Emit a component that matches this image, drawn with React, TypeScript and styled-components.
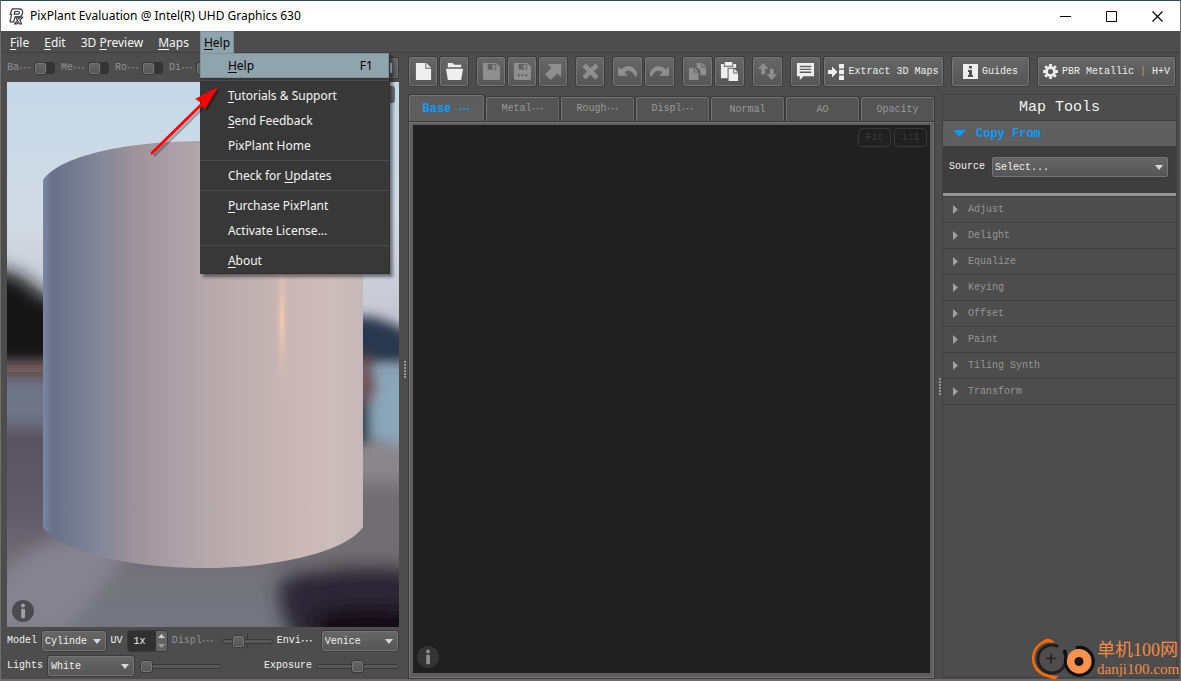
import React from "react";
import styled, { createGlobalStyle, css } from "styled-components";

const mono = `"Liberation Mono", "Noto Sans CJK SC", monospace`;
const sans = `"Noto Sans", "Open Sans", sans-serif`;

const raised = css`
  border: 1px solid #3b3b3b;
  border-radius: 3px;
  background: linear-gradient(#676767, #555555);
  box-shadow: inset 0 0 0 1px #757575;
`;

const GlobalStyle = createGlobalStyle`
  *, *::before, *::after { box-sizing: border-box; }
  body { margin: 0; background: #4d4d4d; font-family: ${mono}; font-size: 10px; color: #f2f2f2; }
  button, input, select { font: inherit; color: inherit; margin: 0; }
  button { cursor: pointer; }
  h2, h3, ul { margin: 0; padding: 0; font: inherit; list-style: none; }
  svg { display: block; flex: none; }
`;

const Window = styled.div`
  position: relative;
  display: flex;
  flex-direction: column;
  min-height: 100vh;
  background: #4d4d4d;
  border: 1px solid #6e6e6e;
  border-top-color: #24505a;
  border-bottom: 2px solid #6c6a6a;
  overflow: hidden;
`;

const TitleBar = styled.header`
  display: flex;
  align-items: center;
  height: 30px;
  padding-left: 8px;
  gap: 6px;
  background: #ffffff;
  color: #000000;
  font: 12px/30px ${sans};
`;

const WindowTitle = styled.span`
  flex: 1;
`;

const CaptionButtons = styled.div`
  display: flex;
`;

const CaptionButton = styled.button`
  display: grid;
  place-items: center;
  width: 46px;
  height: 30px;
  padding: 0;
  border: 0;
  background: none;
`;

const MenuBar = styled.nav`
  display: flex;
  gap: 7px;
  height: 22px;
  padding-left: 5px;
  border-bottom: 1px solid #414141;
  font: 12px/20px ${sans};
`;

const MenuSlot = styled.div`
  position: relative;
`;

const MenuTitle = styled.button<{ $open?: boolean }>`
  height: 22px;
  padding: 0 3px;
  border: 1px solid ${(p) => (p.$open ? "#7b929d" : "transparent")};
  border-width: 1px 1px 0;
  background: ${(p) => (p.$open ? "#90a4ae" : "none")};
  color: ${(p) => (p.$open ? "#000000" : "#f5f5f5")};
`;

const Key = styled.u`
  text-underline-offset: 2px;
  text-decoration-thickness: 1px;
`;

const Dropdown = styled.ul`
  position: absolute;
  z-index: 5;
  top: 22px;
  left: 0;
  width: 190px;
  background: #383838;
  border: 1px solid #303030;
  border-width: 0 1px 1px 0;
  box-shadow: 3px 3px 3px rgba(0, 0, 0, 0.45);
  color: #f5f5f5;
`;

const DropdownItem = styled.button<{ $active?: boolean }>`
  display: flex;
  justify-content: space-between;
  align-items: center;
  width: 100%;
  height: 25px;
  padding: 0 15px 0 27px;
  border: 1px solid ${(p) => (p.$active ? "#7b929d" : "transparent")};
  background: ${(p) => (p.$active ? "#90a4ae" : "none")};
  color: ${(p) => (p.$active ? "#000000" : "inherit")};
  white-space: pre;
`;

const Divider = styled.li`
  height: 5px;
  padding-top: 2px;
  &::before { content: ""; display: block; height: 1px; background: #4c4c4c; }
`;

const Body = styled.main`
  flex: 1;
  display: grid;
  grid-template-columns: minmax(0, 400fr) minmax(0, 779fr);
`;

const PreviewColumn = styled.section`
  display: flex;
  flex-direction: column;
  padding: 0 2px 2px 6px;
`;

const PreviewHeader = styled.div`
  display: flex;
  align-items: center;
  height: 29px;
  gap: 8px;
`;

const ToggleLabel = styled.label`
  display: flex;
  align-items: center;
  gap: 3px;
  width: 46px;
  color: #929292;
`;

const Dots = styled.span`
  font: 12px/12px "Noto Sans CJK SC", sans-serif;
`;

const Abbr = styled.span`
  display: flex;
  align-items: center;
  line-height: 12px;
`;

const Toggle = styled.input`
  appearance: none;
  flex: none;
  width: 21px;
  height: 12px;
  border-radius: 3px;
  background: #343434;
  &::before {
    content: "";
    display: block;
    width: 13px;
    height: 13px;
    ${raised}
  }
`;

const HeaderButton = styled.button`
  display: grid;
  place-items: center;
  width: 30px;
  height: 22px;
  margin-left: auto;
  padding: 0;
  ${raised}
`;

const Viewport = styled.div`
  position: relative;
  flex: 1;
  min-height: 300px;
`;

const SceneArt = styled.svg`
  position: absolute;
  inset: 0;
  width: 100%;
  height: 100%;
`;

const ViewportButton = styled.button`
  position: absolute;
  top: 4px;
  right: 4px;
  width: 40px;
  height: 17px;
  border: 0;
  border-radius: 3px;
  background: #6f767c;
`;

const InfoButton = styled.button<{ $x: number; $y: number }>`
  position: absolute;
  left: ${(p) => p.$x}px;
  bottom: ${(p) => p.$y}px;
  padding: 0;
  border: 0;
  background: none;
`;

const ControlRow = styled.div`
  display: flex;
  align-items: center;
  height: 25px;
  padding-top: 3px;
  gap: 4px;
`;

const FieldLabel = styled.label<{ $dim?: boolean }>`
  display: flex;
  align-items: center;
  line-height: 12px;
  color: ${(p) => (p.$dim ? "#929292" : "#f2f2f2")};
`;

const Spacer = styled.span`
  flex: 1;
`;

const SelectBox = styled.span<{ $w?: number }>`
  display: grid;
  align-items: center;
  ${(p) => (p.$w ? `width: ${p.$w}px;` : "flex: 1;")}
  & > * { grid-area: 1 / 1; }
  & > svg { justify-self: end; margin-right: 6px; pointer-events: none; }
`;

const SelectControl = styled.select`
  appearance: none;
  width: 100%;
  height: 22px;
  padding: 0 16px 0 3px;
  ${raised}
`;

const Spinner = styled.span`
  display: grid;
  grid-template: 1fr 1fr / 28px 12px;
  height: 22px;
  border: 1px solid #3b3b3b;
  border-radius: 3px;
  overflow: hidden;
`;

const SpinnerInput = styled.input`
  grid-row: 1 / 3;
  width: 28px;
  padding: 0 0 0 6px;
  border: 0;
  background: #303030;
`;

const SpinnerStep = styled.button`
  display: grid;
  place-items: center;
  padding: 0;
  border: 0;
  background: #636363;
`;

const Range = styled.input<{ $w: number }>`
  appearance: none;
  width: ${(p) => p.$w}px;
  height: 16px;
  background: none;
  &::-webkit-slider-runnable-track {
    height: 5px;
    border: 1px solid #383838;
    border-radius: 3px;
    background: #585858;
  }
  &::-webkit-slider-thumb {
    appearance: none;
    width: 13px;
    height: 13px;
    margin-top: -5px;
    ${raised}
  }
`;

const TickedRange = styled(Range)`
  background: linear-gradient(#383838, #383838) 50% 50% / 1px 16px no-repeat;
`;

const WorkColumn = styled.div`
  display: flex;
  flex-direction: column;
  padding-right: 3px;
`;

const Toolbar = styled.div`
  display: flex;
  gap: 7px;
  padding: 3px 0 0 7px;
  height: 41px;
`;

const ToolGroup = styled.div<{ $gap?: number }>`
  display: flex;
  gap: ${(p) => p.$gap ?? 1}px;
`;

const ToolButton = styled.button<{ $w?: number; $off?: boolean }>`
  display: flex;
  align-items: center;
  justify-content: center;
  gap: 4px;
  width: ${(p) => p.$w ?? 30}px;
  height: 31px;
  padding: 0;
  white-space: pre;
  ${raised}
  color: ${(p) => (p.$off ? "#8f8f8f" : "#efefef")};
`;

const Bar = styled.span`
  color: #c4a052;
`;

const Workspace = styled.div`
  flex: 1;
  display: grid;
  grid-template-columns: minmax(0, 1fr) 235px;
`;

const MapPane = styled.section`
  display: grid;
  grid-template-columns: 7px minmax(0, 1fr) 7px;
`;

const Grip = styled.div`
  align-self: center;
  display: grid;
  gap: 1px;
  justify-content: center;
  & > i { width: 2px; height: 2px; background: #969696; }
`;

const LeftGrip = styled(Grip)`
  margin-bottom: 34px;
`;

const RightGrip = styled(Grip)`
  justify-content: end;
  padding-right: 1px;
`;

const MapColumn = styled.div`
  display: flex;
  flex-direction: column;
`;

const Tabs = styled.div`
  display: flex;
  align-items: flex-end;
  height: 27px;
`;

const Tab = styled.button<{ $on?: boolean }>`
  flex: ${(p) => (p.$on ? "0 0 77px" : "1")};
  display: flex;
  align-items: center;
  justify-content: center;
  height: ${(p) => (p.$on ? 28 : 25)}px;
  margin-bottom: ${(p) => (p.$on ? -1 : 0)}px;
  padding: 0;
  border: 1px solid #3b3b3b;
  border-bottom: 0;
  border-radius: 3px 3px 0 0;
  box-shadow: inset 1px 1px 0 #757575, inset -1px 0 0 #6a6a6a;
  background: ${(p) => (p.$on ? "linear-gradient(#5d5d5d, #5f5f5f)" : "#545454")};
  color: ${(p) => (p.$on ? "#0a9cff" : "#9a9a9a")};
  font-size: ${(p) => (p.$on ? 12 : 10)}px;
  font-weight: ${(p) => (p.$on ? 700 : 400)};
  white-space: pre;
  & ${Dots} { font-weight: inherit; }
`;

const CanvasFrame = styled.div`
  flex: 1;
  display: flex;
  padding: 3px 4px 5px;
  border: 1px solid #3b3b3b;
  background: #5f5f5f;
  box-shadow: inset 0 0 0 1px #757575;
`;

const Canvas = styled.div`
  position: relative;
  flex: 1;
  display: flex;
  justify-content: flex-end;
  gap: 3px;
  padding: 3px;
  background: #202020;
`;

const GhostButton = styled.button`
  width: 33px;
  height: 19px;
  padding: 0;
  border: 1px solid #383838;
  border-radius: 4px;
  background: none;
  color: #3c3c3c;
`;

const Tools = styled.aside`
  border: 1px solid #404040;
  margin-bottom: 1px;
`;

const ToolsTitle = styled.h2`
  && { font-size: 15px; }
  height: 26px;
  line-height: 25px;
  text-align: center;
  border-bottom: 1px solid #404040;
`;

const OpenSection = styled.button`
  display: flex;
  align-items: center;
  gap: 10px;
  width: 100%;
  height: 25px;
  padding: 0 0 0 10px;
  border: 0;
  background: #5f5f5f;
  color: #0a9cff;
  font-size: 12px;
  font-weight: 700;
`;

const SectionBody = styled.div`
  display: flex;
  align-items: center;
  gap: 6px;
  height: 50px;
  padding: 0 7px 5px 6px;
  background: #3e3e3e;
  border-bottom: 3px solid #969696;
`;

const Section = styled.button`
  display: flex;
  align-items: center;
  gap: 10px;
  width: 100%;
  height: 26px;
  padding: 0 0 0 10px;
  border: 0;
  border-bottom: 1px solid #3f3f3f;
  background: none;
  color: #969696;
`;

const SectionList = styled.div`
  border-top: 1px solid #3f3f3f;
`;

const Pointer = styled.svg`
  position: absolute;
  z-index: 6;
  left: 146px;
  top: 80px;
`;

const Watermark = styled.div`
  position: absolute;
  right: 1px;
  bottom: -1px;
  display: flex;
  align-items: center;
  gap: 2px;
  color: #f58a42;
`;

const WatermarkText = styled.div`
  display: flex;
  flex-direction: column;
  width: 82px;
  white-space: nowrap;
`;

const WatermarkName = styled.span`
  font: 18px/20px "Liberation Serif", "Noto Sans CJK SC", serif;
`;

const WatermarkSite = styled.span`
  font: 15px/18px "Liberation Serif", serif;
`;

const Arrow = ({ fill = "#d8d8d8" }: { fill?: string }) => (
  <svg width="8" height="5"><path d="M0 0h8L4 5z" fill={fill} /></svg>
);

const Ell = ({ children }: { children: string }) => (
  <Abbr>{children}<Dots>…</Dots></Abbr>
);

const GripDots = () => <>{[0, 1, 2, 3, 4, 5].map((n) => <i key={n} />)}</>;

const InfoIcon = ({ disc, mark }: { disc: string; mark: string }) => (
  <svg width="22" height="22" viewBox="0 0 22 22">
    <circle cx="11" cy="11" r="11" fill={disc} />
    <circle cx="11" cy="5.4" r="2" fill={mark} />
    <rect x="9.2" y="8.8" width="3.8" height="9.4" rx="1" fill={mark} />
  </svg>
);

const Logo = () => (
  <svg width="15" height="17" viewBox="0 0 15 17" fill="none" stroke="#3c3c3c" strokeWidth="1.2" strokeLinejoin="round">
    <path d="M3.2.8H10c2.600 0 4 1.600 3.600 4-.4 2.600-2.200 4-5 4H6l-1.300 5H1l1.500-7.500H1.200z" />
    <path d="M5.800 3.500h3.400c1 0 1.400.5 1.200 1.300-.2 1-.9 1.400-1.900 1.400H5.200z" />
    <path d="M6.500 9l2 .2 1.300 1.600 1.600-1.800h2.400l-2.900 3.300 1.700 3.700h-2.100l-1.100-2-1.700 2H5.500l3-3.700z" fill="#fff" />
  </svg>
);

type IconName = "new" | "open" | "save" | "saveAs" | "export" | "delete" | "undo" | "redo" | "copy" | "paste" | "swap" | "comment";

const iconArt: Record<IconName, React.ReactNode> = {
  new: <path fillRule="evenodd" d="M2 1h10v6h6v12H2zM13 1l5 5h-5z" />,
  open: <path d="M3 1h5l2 2h7v2.500H3zM1 7h18l-2 12H3z" />,
  save: <path fillRule="evenodd" d="M1 1h14l4 4v12q0 2-2 2H3q-2 0-2-2zM6 2v6h9V2zM11 3h3v4h-3z" />,
  saveAs: <path fillRule="evenodd" d="M1 1h14l4 4v12q0 2-2 2H3q-2 0-2-2zM6 2v6h9V2zM11 3h3v4h-3zM5 13v2h2v-2zM9 13v2h2v-2zM13 13v2h2v-2z" />,
  export: <path d="M4 2h14v14l-4-4-7 7-6-6 7-7z" />,
  delete: <path d="M5 1.500l5 5 5-5L18.500 5l-5 5 5 5-3.500 3.500-5-5-5 5L1.500 15l5-5-5-5z" />,
  undo: <path d="M0 5l3.500 3C8 3 16 3 20 11v4h-2C16 9 10 7.500 7 11l3.500 3.500H0z" />,
  redo: <path d="M20 5l-3.500 3C12 3 4 3 0 11v4h2C4 9 10 7.500 13 11l-3.500 3.500H20z" />,
  copy: (
    <>
      <path d="M9 1h5v5h5v8h-6V9L9 5z" />
      <path d="M15 1l4 4h-4z" />
      <path d="M1 6h5v5h5v8H1zM7 6l4 4H7z" />
    </>
  ),
  paste: (
    <>
      <path d="M1 2h3v3h10V2h3v4H8v11H1z" />
      <path d="M5 0h8v4H5zM9 7h5v5h5v8H9zM15 7l4 4h-4z" />
    </>
  ),
  swap: <path d="M5.500 1L11 7H7.500v6h-4V7H0zM14.500 19L9 13h3.500V7h4v6H20z" />,
  comment: <path fillRule="evenodd" d="M1 1h18v14H8l-4 4v-4H1zM4 4v1.500h12V4zM4 7v1.500h12V7zM4 10v1.500h12V10z" />,
};

const Icon = ({ name }: { name: IconName }) => (
  <svg width="19" height="19" viewBox="0 0 20 20" fill="currentColor">{iconArt[name]}</svg>
);

const ExtractIcon = () => (
  <svg width="16" height="16" viewBox="0 0 16 16" fill="currentColor">
    <path d="M0 6h4V2.500L9.500 8 4 13.500V10H0zM11 0h5v4.500h-5zM11 5.800h5v4.400h-5zM11 11.500h5V16h-5z" />
  </svg>
);

const GuideIcon = () => (
  <svg width="15" height="15" viewBox="0 0 15 15">
    <path d="M0 0h15v15H0z" fill="#efefef" />
    <path d="M6 2h3v2.500H6zM5 6h4v5h1v2H5v-2h1V8H5z" fill="#555" />
  </svg>
);

const GearIcon = () => (
  <svg width="15" height="15" viewBox="0 0 16 16">
    <g stroke="#efefef" strokeWidth="3">
      <path d="M8 0v3M8 13v3M0 8h3M13 8h3M2.300 2.300l2 2M11.700 11.700l2 2M13.700 2.300l-2 2M4.300 11.700l-2 2" />
      <circle cx="8" cy="8" r="4.300" fill="none" />
    </g>
  </svg>
);

const Scene = () => (
  <SceneArt viewBox="0 0 392 545" preserveAspectRatio="xMidYMid slice" role="img" aria-label="Cylinder preview">
    <defs>
      <linearGradient id="sky" x1="0" y1="0" x2="0" y2="1">
        <stop offset="0" stopColor="#c5d9e8" /><stop offset=".45" stopColor="#d2dbe5" /><stop offset=".8" stopColor="#c6c5d1" /><stop offset="1" stopColor="#c0bdc9" />
      </linearGradient>
      <linearGradient id="floor" x1="0" y1="0" x2="0" y2="1">
        <stop offset="0" stopColor="#6c7384" /><stop offset=".14" stopColor="#6c7181" /><stop offset=".26" stopColor="#59535f" />
        <stop offset=".55" stopColor="#625b68" /><stop offset=".8" stopColor="#74737b" /><stop offset="1" stopColor="#737580" />
      </linearGradient>
      <linearGradient id="body">
        <stop offset="0" stopColor="#7b87a3" /><stop offset=".03" stopColor="#6a7089" /><stop offset=".09" stopColor="#737a90" />
        <stop offset=".18" stopColor="#858797" /><stop offset=".25" stopColor="#948e9a" /><stop offset=".3" stopColor="#a0949c" />
        <stop offset=".4" stopColor="#aa9fa5" /><stop offset=".5" stopColor="#b4a7ab" /><stop offset=".65" stopColor="#c0b0b1" />
        <stop offset=".77" stopColor="#c9b7b5" /><stop offset=".9" stopColor="#ccbcba" /><stop offset="1" stopColor="#c5b8b9" />
      </linearGradient>
      <radialGradient id="glow">
        <stop offset="0" stopColor="#f8cab5" /><stop offset=".4" stopColor="#e8c0b0" stopOpacity=".6" /><stop offset="1" stopColor="#d8bab3" stopOpacity="0" />
      </radialGradient>
      <filter id="soft" x="-50%" y="-50%" width="200%" height="200%"><feGaussianBlur stdDeviation="9" /></filter>
      <filter id="softer" x="-50%" y="-50%" width="200%" height="200%"><feGaussianBlur stdDeviation="6" /></filter>
    </defs>
    <rect width="392" height="300" fill="url(#sky)" />
    <rect y="290" width="392" height="255" fill="url(#floor)" />
    <g filter="url(#soft)">
      <path d="M-30 188q40-5 60 20l30 15v63H-30z" fill="#131613" />
      <path d="M-20 308H70v32H-20z" fill="#6e7687" />
      <path d="M-20 510Q30 450 90 450l40 10-70 90H-20z" fill="#85838f" />
      <path d="M330 350h90v130H330z" fill="#8a878b" />
      <path d="M330 400h90v110H300z" fill="#716e72" />
      <path d="M272 500q50-25 150-13v90H300q-30-40-28-77z" fill="#2a2735" />
      <path d="M310 530q50-10 110 0v50H310z" fill="#190f14" />
    </g>
    <g filter="url(#softer)">
      <path d="M-20 282H60v12H-20z" fill="#6a504b" />
      <path d="M340 236q30-8 70 20v26H340z" fill="#2b394d" />
      <path d="M340 284h70v86l-50-15z" fill="#8ba5b9" />
      <path d="M350 275h12l8 30-8 20h-15z" fill="#704e50" />
      <path d="M345 322h18v38h-18z" fill="#253441" />
    </g>
    <path d="M36 98C52 74 120 59 196 59s144 15 160 39v347c-16 24-84 41-160 41S52 469 36 445z" fill="url(#body)" />
    <ellipse cx="275" cy="235" rx="7" ry="80" fill="url(#glow)" />
  </SceneArt>
);

const toggles = ["Ba", "Me", "Ro", "Di"];
const sections = ["Adjust", "Delight", "Equalize", "Keying", "Offset", "Paint", "Tiling Synth", "Transform"];

const App = () => (
  <>
    <GlobalStyle />
    <Window>
      <TitleBar>
        <Logo />
        <WindowTitle>PixPlant Evaluation @ Intel(R) UHD Graphics 630</WindowTitle>
        <CaptionButtons>
          <CaptionButton aria-label="Minimize"><svg width="11" height="11"><path d="M0 5.500h11" stroke="#000" /></svg></CaptionButton>
          <CaptionButton aria-label="Maximize"><svg width="11" height="11"><path d="M.5.5h10v10H.5z" fill="none" stroke="#000" /></svg></CaptionButton>
          <CaptionButton aria-label="Close"><svg width="11" height="11"><path d="M.5.5l10 10M10.500.5l-10 10" stroke="#000" strokeWidth="1.200" /></svg></CaptionButton>
        </CaptionButtons>
      </TitleBar>

      <MenuBar>
        <MenuTitle><Key>F</Key>ile</MenuTitle>
        <MenuTitle><Key>E</Key>dit</MenuTitle>
        <MenuTitle>3D <Key>P</Key>review</MenuTitle>
        <MenuTitle><Key>M</Key>aps</MenuTitle>
        <MenuSlot>
          <MenuTitle $open><Key>H</Key>elp</MenuTitle>
          <Dropdown>
            <li><DropdownItem $active><span><Key>H</Key>elp</span><span>F1</span></DropdownItem></li>
            <Divider />
            <li><DropdownItem><span><Key>T</Key>utorials &amp; Support</span></DropdownItem></li>
            <li><DropdownItem><span><Key>S</Key>end Feedback</span></DropdownItem></li>
            <li><DropdownItem>PixPlant Home</DropdownItem></li>
            <Divider />
            <li><DropdownItem><span>Check for <Key>U</Key>pdates</span></DropdownItem></li>
            <Divider />
            <li><DropdownItem><span><Key>P</Key>urchase PixPlant</span></DropdownItem></li>
            <li><DropdownItem>Activate License...</DropdownItem></li>
            <Divider />
            <li><DropdownItem><span><Key>A</Key>bout</span></DropdownItem></li>
          </Dropdown>
        </MenuSlot>
      </MenuBar>

      <Body>
        <PreviewColumn>
          <PreviewHeader>
            {toggles.map((t) => (
              <ToggleLabel key={t}><Ell>{t}</Ell><Toggle type="checkbox" /></ToggleLabel>
            ))}
            <HeaderButton aria-label="Full view"><svg width="16" height="10"><path d="M1 1h14v8H1z" fill="none" stroke="#d8d8d8" strokeWidth="2" /></svg></HeaderButton>
          </PreviewHeader>
          <Viewport>
            <Scene />
            <ViewportButton aria-label="View options" />
            <InfoButton $x={5} $y={5} aria-label="Preview info"><InfoIcon disc="#4c4c50" mark="#a2a2a6" /></InfoButton>
          </Viewport>
          <div>
            <ControlRow>
              <FieldLabel htmlFor="model">Model</FieldLabel>
              <SelectBox $w={67}><SelectControl id="model"><option>Cylinde</option></SelectControl><Arrow /></SelectBox>
              <FieldLabel htmlFor="uv">UV</FieldLabel>
              <Spinner>
                <SpinnerInput id="uv" defaultValue="1x" />
                <SpinnerStep aria-label="Increase"><svg width="7" height="4"><path d="M0 4h7L3.500 0z" fill="#d0d0d0" /></svg></SpinnerStep>
                <SpinnerStep aria-label="Decrease"><svg width="7" height="4"><path d="M0 0h7L3.500 4z" fill="#9a9a9a" /></svg></SpinnerStep>
              </Spinner>
              <FieldLabel $dim htmlFor="displacement"><Ell>Displ</Ell></FieldLabel>
              <Spacer />
              <TickedRange $w={51} id="displacement" type="range" defaultValue={26} />
              <FieldLabel htmlFor="environment"><Ell>Envi</Ell></FieldLabel>
              <Spacer />
              <SelectBox $w={80}><SelectControl id="environment"><option>Venice</option></SelectControl><Arrow /></SelectBox>
            </ControlRow>
            <ControlRow>
              <FieldLabel htmlFor="lights">Lights</FieldLabel>
              <SelectBox $w={88}><SelectControl id="lights"><option>White</option></SelectControl><Arrow /></SelectBox>
              <Range $w={83} type="range" defaultValue={0} aria-label="Light level" />
              <Spacer />
              <FieldLabel htmlFor="exposure">Exposure</FieldLabel>
              <TickedRange $w={83} id="exposure" type="range" defaultValue={50} />
            </ControlRow>
          </div>
        </PreviewColumn>

        <WorkColumn>
          <Toolbar>
            <ToolGroup>
              <ToolButton aria-label="New"><Icon name="new" /></ToolButton>
              <ToolButton aria-label="Open"><Icon name="open" /></ToolButton>
            </ToolGroup>
            <ToolGroup>
              <ToolButton $off aria-label="Save"><Icon name="save" /></ToolButton>
              <ToolButton $off aria-label="Save as"><Icon name="saveAs" /></ToolButton>
              <ToolButton $off aria-label="Export"><Icon name="export" /></ToolButton>
            </ToolGroup>
            <ToolButton $off aria-label="Delete"><Icon name="delete" /></ToolButton>
            <ToolGroup>
              <ToolButton $w={31} $off aria-label="Undo"><Icon name="undo" /></ToolButton>
              <ToolButton $w={31} $off aria-label="Redo"><Icon name="redo" /></ToolButton>
            </ToolGroup>
            <ToolGroup>
              <ToolButton $w={31} $off aria-label="Copy"><Icon name="copy" /></ToolButton>
              <ToolButton $w={31} aria-label="Paste"><Icon name="paste" /></ToolButton>
            </ToolGroup>
            <ToolButton $w={31} $off aria-label="Swap"><Icon name="swap" /></ToolButton>
            <ToolGroup $gap={2}>
              <ToolButton $w={31} aria-label="Comment"><Icon name="comment" /></ToolButton>
              <ToolButton $w={121}><ExtractIcon />Extract 3D Maps</ToolButton>
            </ToolGroup>
            <ToolButton $w={79}><GuideIcon />Guides</ToolButton>
            <ToolButton $w={139}><GearIcon /><span>PBR Metallic <Bar>|</Bar> H+V</span></ToolButton>
          </Toolbar>

          <Workspace>
            <MapPane>
              <LeftGrip><GripDots /></LeftGrip>
              <MapColumn>
                <Tabs>
                  <Tab $on>Base <Dots>…</Dots></Tab>
                  <Tab><Ell>Metal</Ell></Tab>
                  <Tab><Ell>Rough</Ell></Tab>
                  <Tab><Ell>Displ</Ell></Tab>
                  <Tab>Normal</Tab>
                  <Tab>AO</Tab>
                  <Tab>Opacity</Tab>
                </Tabs>
                <CanvasFrame>
                  <Canvas>
                    <GhostButton>Fit</GhostButton>
                    <GhostButton>1:1</GhostButton>
                    <InfoButton $x={4} $y={5} aria-label="Map info"><InfoIcon disc="#343434" mark="#8c8c8c" /></InfoButton>
                  </Canvas>
                </CanvasFrame>
              </MapColumn>
              <RightGrip><GripDots /></RightGrip>
            </MapPane>

            <Tools>
              <ToolsTitle>Map Tools</ToolsTitle>
              <OpenSection><svg width="13" height="7"><path d="M0 0h13L6.500 7z" fill="#0a9cff" /></svg>Copy From</OpenSection>
              <SectionBody>
                <FieldLabel htmlFor="source">Source</FieldLabel>
                <SelectBox><SelectControl id="source"><option>Select...</option></SelectControl><Arrow /></SelectBox>
              </SectionBody>
              <SectionList>
                {sections.map((s) => (
                  <Section key={s}><svg width="5" height="9"><path d="M0 0v9l5-4.500z" fill="#a0a0a0" /></svg>{s}</Section>
                ))}
              </SectionList>
            </Tools>
          </Workspace>
        </WorkColumn>
      </Body>

      <Pointer width="80" height="84" viewBox="0 0 80 84">
        <path d="M7 75L57 26" stroke="#000" strokeWidth="3" opacity=".25" />
        <path d="M73 8L50 20l6 3 .500 2 3 6z" fill="#000" opacity=".3" />
        <path d="M5 72L56 22" stroke="#f00" strokeWidth="3" strokeLinecap="round" />
        <path d="M71 6L48 18l6 3 .500 2 3 6z" fill="#f00" />
      </Pointer>

      <Watermark>
        <svg width="64" height="42" viewBox="0 0 64 42" fill="none" strokeLinecap="round">
          <path d="M18 2.500C5 5 0 16 3 26c3 8 9 12 19 13" stroke="#ff6a00" strokeWidth="2.500" />
          <path d="M9 6c3-5 9-7 13-3l1 2c-5-1-9-1-14 1zM16 37l11 1c-1 4-6 5-11-1z" fill="#ff6a00" />
          <path d="M26 8A14 14 0 1 0 33 14" stroke="#231f20" strokeWidth="3" />
          <path d="M15.500 20.500h9M20 16v9" stroke="#231f20" strokeWidth="1.500" />
          <circle cx="48" cy="23.500" r="12.500" fill="#ff914d" />
          <path d="M46 9.500A14 14 0 1 1 35 19l-1-6" stroke="#111" strokeWidth="3" />
          <circle cx="48" cy="23.500" r="4.500" fill="#1a1512" />
        </svg>
        <WatermarkText>
          <WatermarkName>单机100网</WatermarkName>
          <WatermarkSite>danji100.com</WatermarkSite>
        </WatermarkText>
      </Watermark>
    </Window>
  </>
);

export default App;
